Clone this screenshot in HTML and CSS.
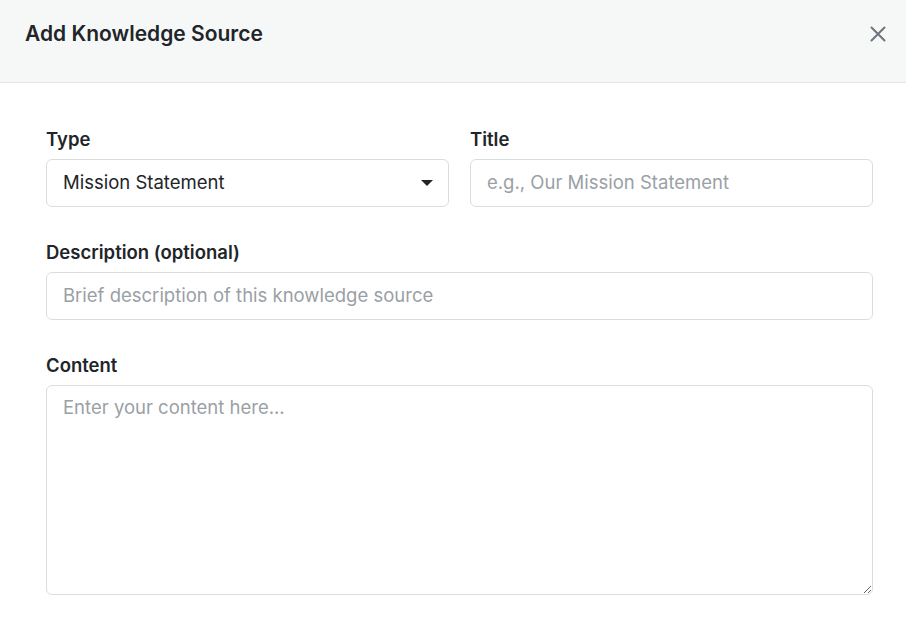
FILE: index.html
```html
<!DOCTYPE html>
<html lang="en">
<head>
    <meta charset="UTF-8">
    <meta name="viewport" content="width=device-width, initial-scale=1.0">
    <title>Add Knowledge Source</title>
    <link rel="stylesheet" href="styles.css">
</head>
<body>
    <div class="modal">
        <div class="modal-header">
            <h2>Add Knowledge Source</h2>
            <button class="close-btn" aria-label="Close">
                <svg width="18" height="18" viewBox="0 0 18 18"><path d="M2.5 2.5 L15.5 15.5 M15.5 2.5 L2.5 15.5" stroke="currentColor" stroke-width="2" stroke-linecap="round"/></svg>
            </button>
        </div>

        <form class="modal-body">
            <div class="row">
                <div class="field">
                    <label for="type">Type</label>
                    <div class="select-wrap">
                        <select id="type">
                            <option>Mission Statement</option>
                            <option>Values</option>
                            <option>Policy</option>
                        </select>
                        <span class="caret"></span>
                    </div>
                </div>
                <div class="field">
                    <label for="title">Title</label>
                    <input type="text" id="title" placeholder="e.g., Our Mission Statement">
                </div>
            </div>

            <div class="field">
                <label for="description">Description (optional)</label>
                <input type="text" id="description" placeholder="Brief description of this knowledge source">
            </div>

            <div class="field">
                <label for="content">Content</label>
                <textarea id="content" placeholder="Enter your content here..."></textarea>
            </div>
        </form>
    </div>
</body>
</html>
```

FILE: styles.css
```css
body {
    margin: 0;
    padding: 0;
    background: #ffffff;
    font-family: Inter, "Noto Sans", Arial, sans-serif;
    color: #212529;
}

.modal-header {
    display: flex;
    justify-content: space-between;
    align-items: flex-start;
    height: 83px;
    box-sizing: border-box;
    padding: 20px 19px 0 25px;
    background: #f6f8f8;
    border-bottom: 1px solid #e3e6e8;
}

.modal-header h2 {
    margin: 0;
    font-size: 21px;
    line-height: 28px;
    font-weight: 600;
    color: #212529;
}

.close-btn {
    border: none;
    background: none;
    padding: 5px 0 0;
    color: #6c757d;
    cursor: pointer;
}

.modal-body {
    display: flex;
    flex-direction: column;
    gap: 33px;
    padding: 44px 33px 0 46px;
}

.row {
    display: grid;
    grid-template-columns: 1fr 1fr;
    gap: 21px;
}

.field {
    display: flex;
    flex-direction: column;
    gap: 8px;
}

label {
    font-size: 18.5px;
    line-height: 24px;
    font-weight: 600;
    color: #212529;
}

input, select, textarea {
    box-sizing: border-box;
    width: 100%;
    margin: 0;
    font-family: inherit;
    font-size: 18.5px;
    color: #212529;
    background: #ffffff;
    border: 1px solid #dadde0;
    border-radius: 6px;
    outline: none;
}

input, select {
    height: 48px;
    padding: 0 16px 2px;
}

::placeholder {
    color: #9aa0a6;
}

.select-wrap {
    position: relative;
}

select {
    appearance: none;
    -webkit-appearance: none;
}

.caret {
    position: absolute;
    right: 16px;
    top: 21px;
    width: 0;
    height: 0;
    border-left: 6px solid transparent;
    border-right: 6px solid transparent;
    border-top: 6px solid #212529;
    pointer-events: none;
}

textarea {
    height: 210px;
    padding: 9px 16px;
    resize: vertical;
    line-height: 24px;
}
```
